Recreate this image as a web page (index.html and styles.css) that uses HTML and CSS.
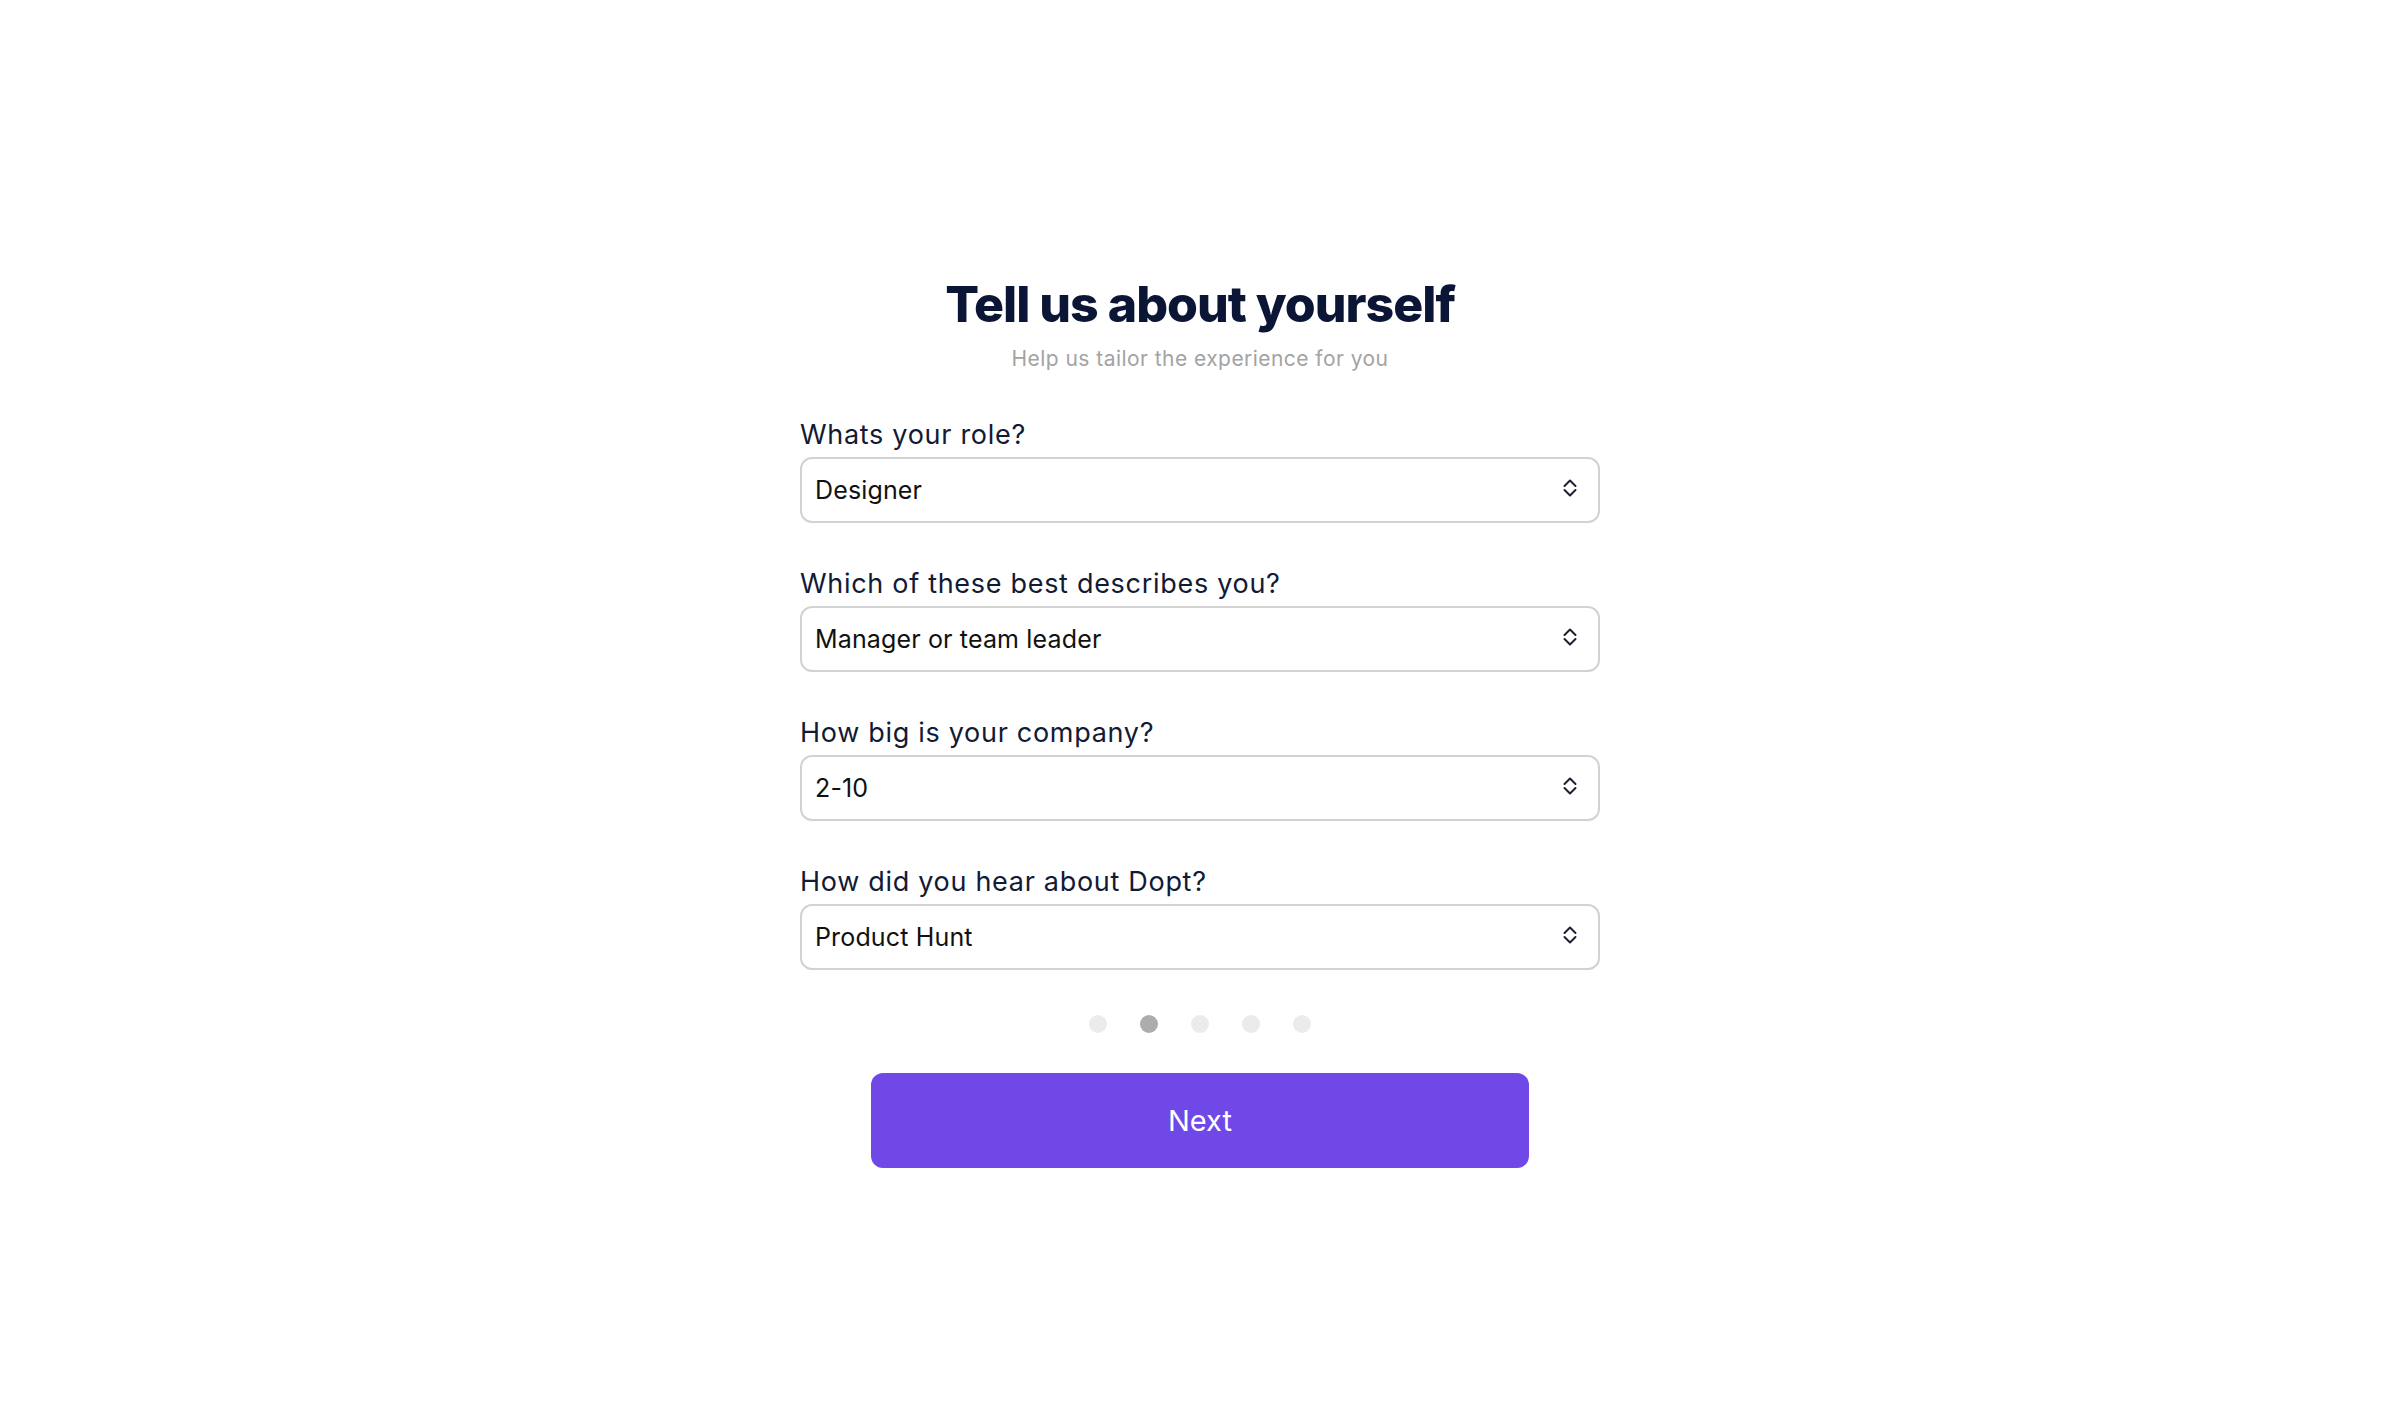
FILE: index.html
```html
<!DOCTYPE html>
<html lang="en">
<head>
    <meta charset="UTF-8">
    <meta name="viewport" content="width=device-width, initial-scale=1.0">
    <title>Onboarding - About you</title>
    <link rel="stylesheet" href="styles.css">
</head>
<body>

    <div class="onboarding">
        <div class="header">
            <h1>Tell us about yourself</h1>
            <p class="subtitle">Help us tailor the experience for you</p>
        </div>

        <form class="survey" onsubmit="return false;">
            <div class="field">
                <label for="role">Whats your role?</label>
                <div class="select-wrap">
                    <select id="role">
                        <option>Designer</option>
                        <option>Developer</option>
                        <option>Product Manager</option>
                    </select>
                    <svg class="chevron" viewBox="0 0 14 20" width="14" height="20"><polyline points="1.5,8 7,2.5 12.5,8"/><polyline points="1.5,12 7,17.5 12.5,12"/></svg>
                </div>
            </div>

            <div class="field">
                <label for="describes">Which of these best describes you?</label>
                <div class="select-wrap">
                    <select id="describes">
                        <option>Manager or team leader</option>
                        <option>Individual contributor</option>
                        <option>Founder</option>
                    </select>
                    <svg class="chevron" viewBox="0 0 14 20" width="14" height="20"><polyline points="1.5,8 7,2.5 12.5,8"/><polyline points="1.5,12 7,17.5 12.5,12"/></svg>
                </div>
            </div>

            <div class="field">
                <label for="size">How big is your company?</label>
                <div class="select-wrap">
                    <select id="size">
                        <option>2-10</option>
                        <option>11-50</option>
                        <option>51-200</option>
                    </select>
                    <svg class="chevron" viewBox="0 0 14 20" width="14" height="20"><polyline points="1.5,8 7,2.5 12.5,8"/><polyline points="1.5,12 7,17.5 12.5,12"/></svg>
                </div>
            </div>

            <div class="field">
                <label for="source">How did you hear about Dopt?</label>
                <div class="select-wrap">
                    <select id="source">
                        <option>Product Hunt</option>
                        <option>Twitter</option>
                        <option>A friend</option>
                    </select>
                    <svg class="chevron" viewBox="0 0 14 20" width="14" height="20"><polyline points="1.5,8 7,2.5 12.5,8"/><polyline points="1.5,12 7,17.5 12.5,12"/></svg>
                </div>
            </div>

            <div class="steps">
                <span class="dot"></span>
                <span class="dot active"></span>
                <span class="dot"></span>
                <span class="dot"></span>
                <span class="dot"></span>
            </div>

            <button type="submit" class="next-btn">Next</button>
        </form>
    </div>

</body>
</html>
```

FILE: styles.css
```css
body {
    margin: 0;
    background-color: #ffffff;
    font-family: Inter, "Noto Sans", Arial, sans-serif;
}

.onboarding {
    width: 800px;
    margin: 0 auto;
    padding-top: 275px;
}

.header {
    text-align: center;
}

.header h1 {
    margin: 0;
    font-size: 50px;
    line-height: 58px;
    font-weight: 800;
    letter-spacing: -1px;
    color: #0b1636;
}

.header .subtitle {
    margin: 12px 0 0 0;
    font-size: 21px;
    line-height: 28px;
    letter-spacing: 0.45px;
    color: #a3a3a3;
}

.survey {
    margin-top: 46px;
}

.field {
    margin-bottom: 45px;
}

.field label {
    display: block;
    font-size: 27px;
    line-height: 32px;
    letter-spacing: 0.7px;
    color: #121a35;
    margin-bottom: 6px;
}

.select-wrap {
    position: relative;
}

.select-wrap select {
    display: block;
    width: 100%;
    height: 66px;
    padding: 0 50px 0 13px;
    border: 2px solid #d2d2d2;
    border-radius: 12px;
    background-color: #ffffff;
    font-family: inherit;
    font-size: 25px;
    letter-spacing: 0.15px;
    color: #111111;
    appearance: none;
    -webkit-appearance: none;
    outline: none;
}

.select-wrap .chevron {
    position: absolute;
    right: 23px;
    top: 21px;
    fill: none;
    stroke: #1b1f2e;
    stroke-width: 2;
    stroke-linecap: round;
    stroke-linejoin: round;
    pointer-events: none;
}

.steps {
    display: flex;
    justify-content: center;
    gap: 33px;
}

.dot {
    width: 18px;
    height: 18px;
    border-radius: 50%;
    background-color: #ebebeb;
}

.dot.active {
    background-color: #acacac;
}

.next-btn {
    display: block;
    width: 658px;
    height: 95px;
    margin: 40px auto 0 auto;
    border: none;
    border-radius: 12px;
    background-color: #7048e8;
    color: #ffffff;
    font-family: inherit;
    font-size: 29px;
    cursor: pointer;
}
```
